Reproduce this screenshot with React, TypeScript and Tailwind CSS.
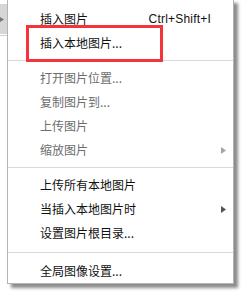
import React from 'react';

type Item =
  | { kind: 'item'; label: string; shortcut?: string; disabled?: boolean; submenu?: boolean }
  | { kind: 'sep'; tall?: boolean };

const items: Item[] = [
  { kind: 'item', label: '插入图片', shortcut: 'Ctrl+Shift+I' },
  { kind: 'item', label: '插入本地图片...' },
  { kind: 'sep' },
  { kind: 'item', label: '打开图片位置...', disabled: true },
  { kind: 'item', label: '复制图片到...', disabled: true },
  { kind: 'item', label: '上传图片', disabled: true },
  { kind: 'item', label: '缩放图片', disabled: true, submenu: true },
  { kind: 'sep' },
  { kind: 'item', label: '上传所有本地图片' },
  { kind: 'item', label: '当插入本地图片时', submenu: true },
  { kind: 'item', label: '设置图片根目录...' },
  { kind: 'sep', tall: true },
  { kind: 'item', label: '全局图像设置...' },
];

function Arrow({ disabled }: { disabled?: boolean }) {
  return (
    <svg width="5" height="7" viewBox="0 0 5 7" className="shrink-0">
      <path d="M0 0L5 3.5L0 7Z" fill={disabled ? '#a6a6a6' : '#555555'} />
    </svg>
  );
}

export default function App() {
  return (
    <div
      className="flex h-[297px] w-[242px] overflow-hidden bg-white text-[12px]"
      style={{ fontFamily: '"Microsoft YaHei", "Noto Sans CJK SC", sans-serif' }}
    >
      {/* parent menu peeking from behind */}
      <div className="flex w-[7px] shrink-0 flex-col gap-px pt-[4px]">
        <div className="flex h-[30px] items-center bg-[#d6d6d6]">
          <svg width="4" height="5" viewBox="0 0 4 5">
            <path d="M0 0L4 2.5L0 5Z" fill="#777" />
          </svg>
        </div>
        <div className="h-px bg-[#cfcfcf]" />
      </div>

      {/* the menu */}
      <div className="relative -mt-px flex w-[227px] flex-col self-start border border-[#b4b4b4] bg-white pt-[7px] shadow-[4px_4px_3px_rgba(0,0,0,0.45)]">
        {items.map((it, i) =>
          it.kind === 'sep' ? (
            <div key={i} className={`flex items-center ${it.tall ? 'h-[14px]' : 'h-[11px]'}`}>
              <div className="h-px w-full bg-[#d9d9d9]" />
            </div>
          ) : (
            <div
              key={i}
              className={`flex h-[24px] items-center pl-[32px] leading-none ${
                it.submenu ? 'pr-[7px]' : 'pr-[22px]'
              } ${it.disabled ? 'text-[#6d6d6d]' : 'text-[#111111]'}`}
            >
              <span className="flex-1 whitespace-nowrap">{it.label}</span>
              {it.shortcut && (
                <span
                  className="whitespace-nowrap tracking-[0.2px]"
                  style={{ fontFamily: '"Liberation Sans", Arial, sans-serif' }}
                >
                  {it.shortcut}
                </span>
              )}
              {it.submenu && <Arrow disabled={it.disabled} />}
            </div>
          )
        )}

        {/* red annotation box */}
        <div className="pointer-events-none absolute left-[18px] top-[25px] h-[37px] w-[137px] border-[3px] border-[#f5343a]" />
      </div>
    </div>
  );
}
